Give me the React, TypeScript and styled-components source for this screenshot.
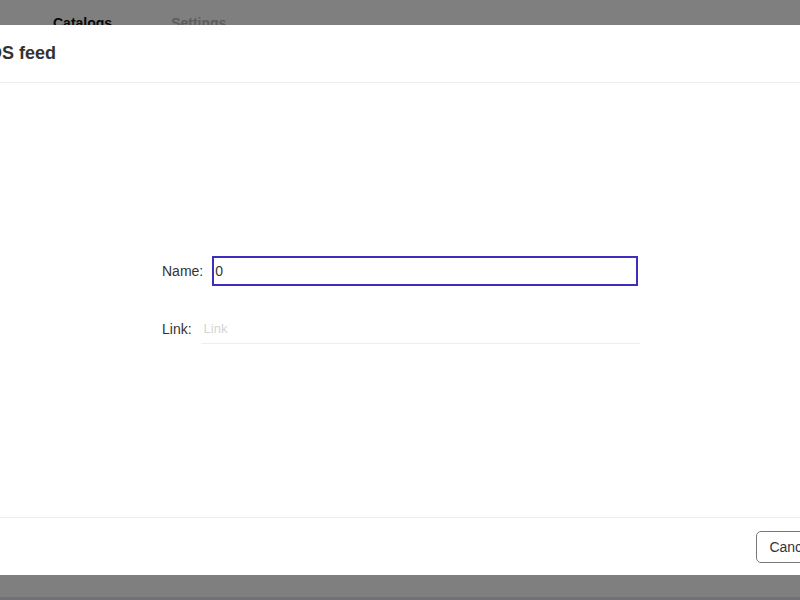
import styled, { createGlobalStyle } from 'styled-components';

const GlobalStyle = createGlobalStyle`
  html, body {
    margin: 0;
    padding: 0;
    background: #ffffff;
    font-family: "Liberation Sans", Arial, sans-serif;
    color: #333333;
  }
`;

const Page = styled.div`
  width: 800px;
  height: 600px;
  position: relative;
  overflow: hidden;
  background: #ffffff;
  display: flex;
  flex-direction: column;
`;

const Tabs = styled.nav`
  display: flex;
  gap: 59px;
  padding: 15px 0 0 53px;
`;

const Tab = styled.span<{ $active?: boolean }>`
  font-size: 14px;
  font-weight: 700;
  color: ${(p) => (p.$active ? '#111111' : '#bbbbbb')};
`;

const PageFill = styled.div`
  flex: 1;
`;

const BottomBar = styled.div`
  height: 3px;
  background: #e4e2f4;
`;

const Overlay = styled.div`
  position: absolute;
  inset: 0;
  background: rgba(0, 0, 0, 0.5);
`;

const Modal = styled.div`
  position: absolute;
  top: 25px;
  left: -41px;
  width: 882px;
  height: 550px;
  background: #ffffff;
  display: flex;
  flex-direction: column;
`;

const Header = styled.header`
  height: 57px;
  display: flex;
  align-items: center;
  padding: 0 24px;
  border-bottom: 1px solid #eeeeee;
`;

const Title = styled.h2`
  margin: 0;
  font-size: 18px;
  font-weight: 700;
  color: #333333;
`;

const Body = styled.div`
  flex: 1;
  display: flex;
  align-items: center;
  justify-content: center;
`;

const Form = styled.form`
  width: 478px;
  display: flex;
  flex-direction: column;
  gap: 28px;
  margin: 0 0 0 2px;
`;

const Row = styled.label`
  display: flex;
  align-items: center;
  gap: 9px;
  font-size: 14px;
  color: #333333;
`;

const TextInput = styled.input<{ $focused?: boolean }>`
  flex: 1;
  height: 30px;
  box-sizing: border-box;
  font-family: "Liberation Sans", Arial, sans-serif;
  font-size: 13px;
  color: #333333;
  background: #ffffff;
  outline: none;
  padding: 0 3px;
  border: none;
  border-bottom: 1px solid #eeeeee;

  ${(p) =>
    p.$focused &&
    `
    border: 2px solid #3f2dbd;
    padding: 0 1px;
    margin-right: 2px;
    font-size: 14px;
  `}

  &::placeholder {
    color: #d4d4d4;
  }
`;

const Footer = styled.footer`
  height: 57px;
  display: flex;
  align-items: center;
  justify-content: flex-end;
  gap: 8px;
  padding: 0 15px 0 24px;
  border-top: 1px solid #eeeeee;
`;

const Button = styled.button`
  height: 32px;
  padding: 0 12px;
  background: #ffffff;
  border: 1px solid #777777;
  border-radius: 5px;
  font-family: "Liberation Sans", Arial, sans-serif;
  font-size: 14px;
  color: #333333;
`;

export default function App() {
  return (
    <>
      <GlobalStyle />
      <Page>
        <Tabs>
          <Tab $active>Catalogs</Tab>
          <Tab>Settings</Tab>
        </Tabs>
        <PageFill />
        <BottomBar />
        <Overlay />
        <Modal>
          <Header>
            <Title>iOS feed</Title>
          </Header>
          <Body>
            <Form onSubmit={(e) => e.preventDefault()}>
              <Row>
                Name:
                <TextInput $focused defaultValue="0" autoFocus />
              </Row>
              <Row>
                Link:
                <TextInput placeholder="Link" />
              </Row>
            </Form>
          </Body>
          <Footer>
            <Button type="button">Cancel</Button>
          </Footer>
        </Modal>
      </Page>
    </>
  );
}
